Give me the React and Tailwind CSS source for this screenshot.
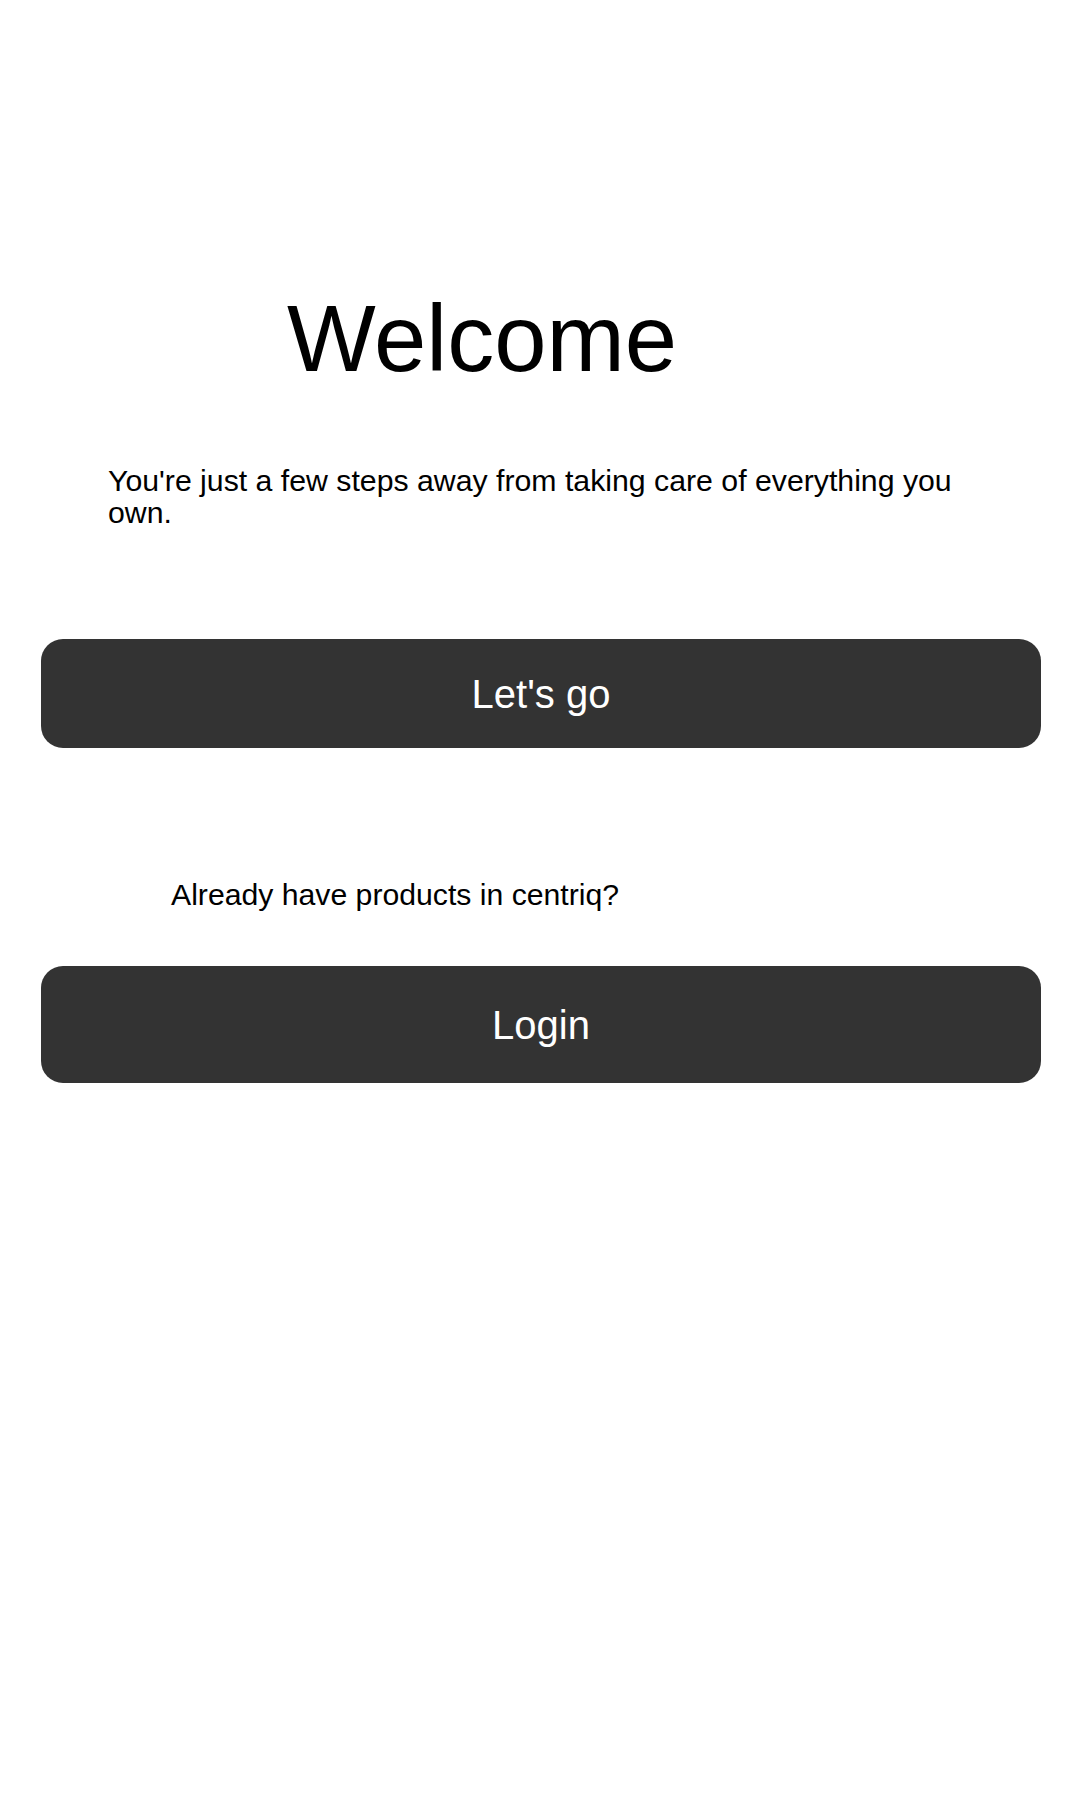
export default function App() {
  return (
    <div className="min-h-[1800px] w-[1080px] bg-white text-black font-['Liberation_Sans',Arial,sans-serif]">
      {/* Heading */}
      <h1 className="pt-[292px] pl-[287px] text-[94px] leading-[94px] font-normal">
        Welcome
      </h1>

      {/* Intro */}
      <p className="mt-[79px] pl-[108px] pr-[106px] text-[30.25px] leading-[32px]">
        You're just a few steps away from taking care of everything you own.
      </p>

      <button className="mt-[110px] ml-[41px] flex h-[109px] w-[1000px] items-center justify-center rounded-[22px] bg-[#333333] text-[40px] text-white">
        Let's go
      </button>

      <p className="mt-[131px] pl-[171px] text-[30.2px] leading-[32px]">
        Already have products in centriq?
      </p>

      <button className="mt-[55px] ml-[41px] flex h-[117px] w-[1000px] items-center justify-center rounded-[22px] bg-[#333333] text-[40px] text-white">
        Login
      </button>
    </div>
  );
}
